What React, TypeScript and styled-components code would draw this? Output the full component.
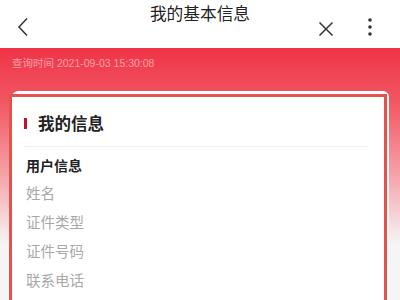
import React from "react";
import styled, { createGlobalStyle } from "styled-components";

const Global = createGlobalStyle`
  html, body { margin: 0; padding: 0; }
  body {
    width: 400px; height: 300px; overflow: hidden;
    background: #f5f5f6;
    font-family: "Noto Sans CJK SC", "Liberation Sans", sans-serif;
  }
`;

const Page = styled.div`
  width: 400px;
  height: 300px;
  display: flex;
  flex-direction: column;
  overflow: hidden;
`;

const Header = styled.div`
  height: 48px;
  flex: none;
  background: #fff;
  position: relative;
  display: flex;
  align-items: flex-start;
  justify-content: center;
`;

const Title = styled.div`
  margin-top: 0;
  font-size: 16.7px;
  line-height: 26px;
  color: #222;
`;

const IconBtn = styled.div<{ $left: number; $top: number }>`
  position: absolute;
  left: ${(p) => p.$left}px;
  top: ${(p) => p.$top}px;
  display: flex;
`;

const Body = styled.div`
  flex: 1;
  background: linear-gradient(180deg, #ef3446 0%, #f15864 22%, #f6a2a8 50%, #f5f5f6 78%);
  display: flex;
  flex-direction: column;
`;

const Stamp = styled.div`
  padding: 7px 0 0 12px;
  height: 36px;
  box-sizing: border-box;
  font-size: 10.5px;
  line-height: 16px;
  color: rgba(255, 255, 255, 0.5);
  font-family: "Liberation Sans", "Noto Sans CJK SC", sans-serif;
`;

const Card = styled.div`
  margin: 7px 11px 0 12px;
  flex: 1;
  background: #fff;
  border-radius: 6px 6px 0 0;
  padding-top: 3px;
  display: flex;
  flex-direction: column;
`;

const Marked = styled.div`
  margin-left: -3px;
  margin-right: 2px;
  flex: 1;
  border: 3px solid #e5524c;
  border-bottom: none;
  background: #fff;
  padding: 0 14px 0 14px;
`;

const Heading = styled.div`
  display: flex;
  align-items: center;
  height: 50px;
  padding-top: 4px;
  box-sizing: border-box;
  border-bottom: 1px solid #f0f0f0;
  margin-left: -2px;
  margin-right: 2px;
`;

const Bar = styled.span`
  width: 3px;
  height: 11px;
  background: #c8102e;
  margin-right: 11px;
`;

const HeadText = styled.span`
  font-size: 16.5px;
  font-weight: 700;
  color: #222;
  padding-bottom: 2px;
`;

const Section = styled.div`
  margin-top: 8px;
  font-size: 14px;
  font-weight: 700;
  line-height: 20px;
  color: #222;
`;

const Field = styled.div`
  font-size: 14.5px;
  line-height: 29px;
  color: #a8a8a8;
  &:first-of-type { margin-top: 0; }
`;

const Fields = styled.div`
  margin-top: 3px;
`;

export default function App() {
  return (
    <Page>
      <Global />
      <Header>
        <IconBtn $left={16} $top={17}>
          <svg width="14" height="20" viewBox="0 0 14 20">
            <path d="M11 1.5 L3 10 L11 18.5" fill="none" stroke="#333" strokeWidth="1.5" />
          </svg>
        </IconBtn>
        <Title>我的基本信息</Title>
        <IconBtn $left={318} $top={21}>
          <svg width="16" height="16" viewBox="0 0 16 16">
            <path d="M1.5 1.5 L14.5 14.5 M14.5 1.5 L1.5 14.5" stroke="#333" strokeWidth="1.5" />
          </svg>
        </IconBtn>
        <IconBtn $left={366} $top={17}>
          <svg width="8" height="20" viewBox="0 0 8 20">
            <circle cx="4" cy="3" r="1.8" fill="#333" />
            <circle cx="4" cy="10" r="1.8" fill="#333" />
            <circle cx="4" cy="17" r="1.8" fill="#333" />
          </svg>
        </IconBtn>
      </Header>
      <Body>
        <Stamp>查询时间 2021-09-03 15:30:08</Stamp>
        <Card>
          <Marked>
            <Heading>
              <Bar />
              <HeadText>我的信息</HeadText>
            </Heading>
            <Section>用户信息</Section>
            <Fields>
              <Field>姓名</Field>
              <Field>证件类型</Field>
              <Field>证件号码</Field>
              <Field>联系电话</Field>
            </Fields>
          </Marked>
        </Card>
      </Body>
    </Page>
  );
}
